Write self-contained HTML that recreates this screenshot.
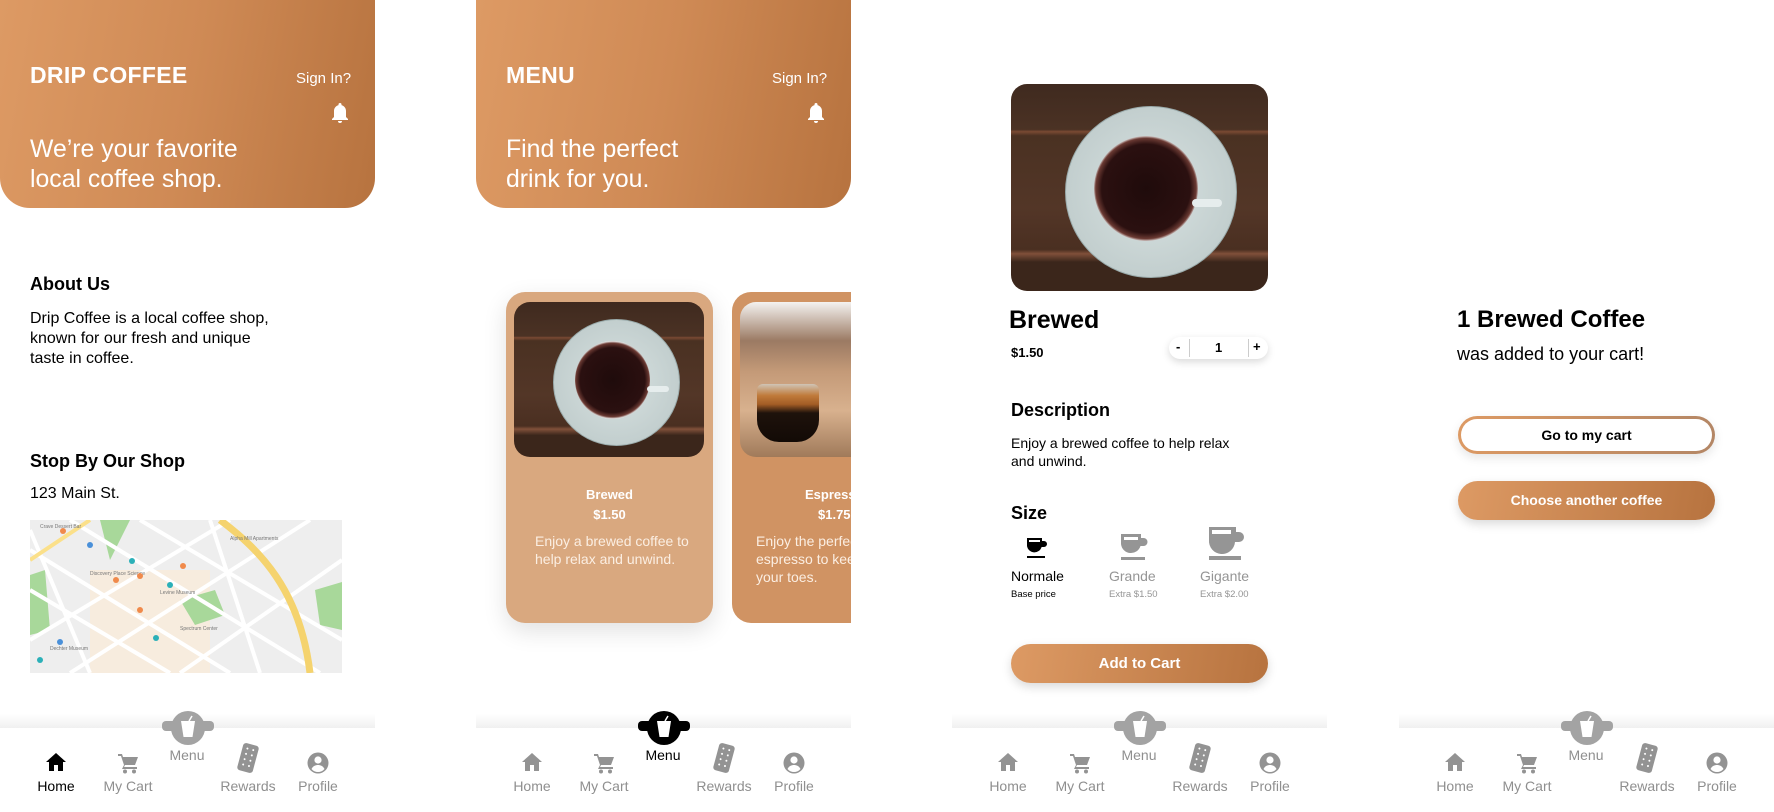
<!DOCTYPE html>
<html><head><meta charset="utf-8">
<style>
*{margin:0;padding:0;box-sizing:border-box}
body{width:1774px;height:812px;background:#fff;position:relative;overflow:hidden;font-family:"Liberation Sans","DejaVu Sans",sans-serif;color:#000}
.a{position:absolute}
.scr{position:absolute;top:0;width:375px;height:812px;overflow:hidden}
.hdr{position:absolute;left:0;top:0;width:375px;height:208px;border-radius:0 0 30px 30px;background:linear-gradient(100deg,#dd9a64 0%,#cf8a55 50%,#b7733f 100%);color:#fff}
.hdr .t{position:absolute;left:30px;top:62px;font-size:23px;font-weight:bold;letter-spacing:.3px}
.hdr .s{position:absolute;left:296px;top:70px;font-size:15px}
.hdr .b{position:absolute;left:331px;top:102px}
.hdr .g{position:absolute;left:30px;top:135px;font-size:24.8px;line-height:30px}
.nav{position:absolute;left:0;top:700px;width:375px;height:112px}
.nav .sh{position:absolute;left:0;top:14px;width:375px;height:14px;background:linear-gradient(#fff,#f0f0f0)}
.nav .bg{position:absolute;left:0;top:28px;width:375px;height:84px;background:#fff}
.nav .lbl{position:absolute;top:78px;font-size:14px;color:#8f8f8f;text-align:center;width:80px}
.nav svg{position:absolute}
.gbtn{position:absolute;border-radius:20px;background:linear-gradient(100deg,#dd9a64,#b7733f);color:#fff;font-weight:bold;text-align:center;box-shadow:0 4px 10px rgba(0,0,0,.15)}
.coffee{position:absolute;overflow:hidden;background:
 linear-gradient(180deg,#3f2a1f 0%,#4b3224 22%,#7a4a33 23%,#4a3122 25%,#533627 60%,#4a2f21 80%,#80503a 82%,#3b261b 86%,#3b261b 100%)}
</style></head><body>

<!-- SCREEN 1 -->
<div class="scr" style="left:0">
 <div class="hdr">
  <div class="t">DRIP COFFEE</div>
  <div class="s">Sign In?</div>
  <svg class="b" width="18" height="22" viewBox="0 0 18 22"><path d="M9 1a1.5 1.5 0 0 1 1.5 1.5v.6C13.3 3.8 15 6.3 15 9v6l2 2v1H1v-1l2-2V9c0-2.7 1.7-5.2 4.5-5.9v-.6A1.5 1.5 0 0 1 9 1zM7 19h4a2 2 0 0 1-4 0z" fill="#fff"/></svg>
  <div class="g">We’re your favorite<br>local coffee shop.</div>
 </div>
 <div class="a" style="left:30px;top:274px;font-size:18px;font-weight:bold">About Us</div>
 <div class="a" style="left:30px;top:309px;font-size:16px;line-height:20px">Drip Coffee is a local coffee shop,<br>known for our fresh and unique<br>taste in coffee.</div>
 <div class="a" style="left:30px;top:451px;font-size:18px;font-weight:bold">Stop By Our Shop</div>
 <div class="a" style="left:30px;top:485px;font-size:16px">123 Main St.</div>
 <svg class="a" style="left:30px;top:520px" width="312" height="153" viewBox="0 0 312 153">
  <rect width="312" height="153" fill="#eeeeee"/>
  <rect x="60" y="50" width="120" height="103" fill="#f7ecde"/>
  <path d="M70 0 L100 0 L80 40 Z" fill="#a8d89a"/>
  <path d="M150 80 L185 70 L195 95 L165 105 Z" fill="#a8d89a"/>
  <path d="M285 70 L312 62 L312 110 L290 105 Z" fill="#a8d89a"/>
  <path d="M0 55 L15 50 L20 110 L0 115 Z" fill="#a8d89a"/>
  <g stroke="#fff" stroke-width="4" fill="none">
   <path d="M0 30 L200 153"/><path d="M0 70 L140 153"/><path d="M40 0 L290 153"/><path d="M110 0 L312 120"/><path d="M0 120 L200 0"/><path d="M40 153 L280 0"/><path d="M150 153 L312 40"/><path d="M0 10 L60 153"/><path d="M180 0 L230 153"/>
  </g>
  <path d="M0 40 L60 0" stroke="#fbe08a" stroke-width="4" fill="none"/>
  <path d="M190 0 C230 30 270 70 280 153" stroke="#f5d36e" stroke-width="7" fill="none"/>
  <g font-size="5" fill="#777"><text x="10" y="8">Crave Dessert Bar</text><text x="200" y="20">Alpha Mill Apartments</text><text x="60" y="55">Discovery Place Science</text><text x="130" y="74">Levine Museum</text><text x="20" y="130">Dechter Museum</text><text x="150" y="110">Spectrum Center</text></g>
  <g fill="#f08a4b"><circle cx="33" cy="11" r="3"/><circle cx="153" cy="46" r="3"/><circle cx="110" cy="56" r="3"/><circle cx="110" cy="90" r="3"/><circle cx="86" cy="60" r="3"/></g>
  <g fill="#4a90d9"><circle cx="60" cy="25" r="3"/><circle cx="30" cy="122" r="3"/></g>
  <g fill="#2bb0b8"><circle cx="102" cy="41" r="3"/><circle cx="140" cy="65" r="3"/><circle cx="126" cy="118" r="3"/><circle cx="10" cy="140" r="3"/></g>
 </svg>
 <div class="nav" id="n1"></div>
</div>

<!-- SCREEN 2 -->
<div class="scr" style="left:476px">
 <div class="hdr">
  <div class="t">MENU</div>
  <div class="s">Sign In?</div>
  <svg class="b" width="18" height="22" viewBox="0 0 18 22"><path d="M9 1a1.5 1.5 0 0 1 1.5 1.5v.6C13.3 3.8 15 6.3 15 9v6l2 2v1H1v-1l2-2V9c0-2.7 1.7-5.2 4.5-5.9v-.6A1.5 1.5 0 0 1 9 1zM7 19h4a2 2 0 0 1-4 0z" fill="#fff"/></svg>
  <div class="g">Find the perfect<br>drink for you.</div>
 </div>
 <div class="a" style="left:30px;top:292px;width:207px;height:331px;border-radius:19px;background:#d9a87f;box-shadow:0 8px 24px rgba(0,0,0,.12);color:#fff">
  <div class="coffee" style="left:8px;top:10px;width:190px;height:155px;border-radius:16px">
   <div class="a" style="left:39px;top:17px;width:127px;height:127px;border-radius:50%;background:radial-gradient(circle,#d8e2e1 0%,#b9c6c6 100%);border:1px solid #9aa"></div>
   <div class="a" style="left:61px;top:39px;width:75px;height:78px;border-radius:50%;background:radial-gradient(circle,#1f0b0b 0%,#2b1010 60%,#6b3a33 68%,#efefef 72%,#e8eeee 100%)"></div>
   <div class="a" style="left:133px;top:84px;width:22px;height:6px;background:#e6eded;border-radius:3px"></div>
  </div>
  <div class="a" style="left:0;top:193px;width:207px;text-align:center;font-weight:bold;font-size:13px;line-height:20px">Brewed<br>$1.50</div>
  <div class="a" style="left:29px;top:240px;font-size:14px;line-height:18px;color:#fbeee2">Enjoy a brewed coffee to<br>help relax and unwind.</div>
 </div>
 <div class="a" style="left:256px;top:292px;width:207px;height:331px;border-radius:19px;background:#d09363;color:#fff;overflow:hidden">
  <div class="a" style="left:8px;top:10px;width:190px;height:155px;border-radius:16px;background:linear-gradient(180deg,#f4f2f0 0%,#9b7a63 25%,#c49a78 45%,#d8b18e 70%,#a07a5a 100%)">
   <div class="a" style="left:17px;top:82px;width:62px;height:58px;border-radius:6px 6px 22px 22px;background:linear-gradient(180deg,#d0c4b5 0%,#c07a3a 20%,#a35d25 35%,#1e120b 50%,#120a06 100%)"></div>
  </div>
  <div class="a" style="left:73px;top:193px;font-weight:bold;font-size:13px;line-height:20px;white-space:nowrap">Espresso</div>
  <div class="a" style="left:86px;top:213px;font-weight:bold;font-size:13px;line-height:20px;white-space:nowrap">$1.75</div>
  <div class="a" style="left:24px;top:240px;font-size:14px;line-height:18px;color:#fbeee2;white-space:nowrap">Enjoy the perfect<br>espresso to keep<br>your toes.</div>
 </div>
 <div class="nav" id="n2"></div>
</div>

<!-- SCREEN 3 -->
<div class="scr" style="left:952px">
 <div class="coffee" style="left:59px;top:84px;width:257px;height:207px;border-radius:16px">
  <div class="a" style="left:54px;top:22px;width:172px;height:172px;border-radius:50%;background:radial-gradient(circle,#d8e2e1 0%,#b9c6c6 100%);border:1px solid #9aa"></div>
  <div class="a" style="left:83px;top:52px;width:104px;height:105px;border-radius:50%;background:radial-gradient(circle,#1f0b0b 0%,#2b1010 60%,#6b3a33 68%,#efefef 72%,#e8eeee 100%)"></div>
  <div class="a" style="left:181px;top:115px;width:30px;height:8px;background:#e6eded;border-radius:4px"></div>
 </div>
 <div class="a" style="left:57px;top:306px;font-size:25px;font-weight:bold">Brewed</div>
 <div class="a" style="left:59px;top:345px;font-size:13px;font-weight:bold">$1.50</div>
 <div class="a" style="left:217px;top:337px;width:99px;height:22px;border-radius:11px;background:#fff;box-shadow:0 3px 8px rgba(0,0,0,.15);font-size:13px;font-weight:bold">
  <span class="a" style="left:7px;top:2px">-</span>
  <span class="a" style="left:20px;top:2px;width:1px;height:18px;background:#ccc"></span>
  <span class="a" style="left:46px;top:3px">1</span>
  <span class="a" style="left:79px;top:2px;width:1px;height:18px;background:#ccc"></span>
  <span class="a" style="left:84px;top:2px">+</span>
 </div>
 <div class="a" style="left:59px;top:400px;font-size:18px;font-weight:bold">Description</div>
 <div class="a" style="left:59px;top:434px;font-size:14px;line-height:18px">Enjoy a brewed coffee to help relax<br>and unwind.</div>
 <div class="a" style="left:59px;top:503px;font-size:18px;font-weight:bold">Size</div>
 <svg class="a" style="left:74px;top:536px" width="22" height="24" viewBox="0 0 22 24"><path d="M1 2h15v3h2a3 3 0 0 1 0 6h-2.4A7.5 7.5 0 0 1 1 10z" fill="#000"/><rect x="3" y="4" width="11" height="2" fill="#fff"/><rect x="1" y="20" width="18" height="2" fill="#000"/></svg>
 <svg class="a" style="left:168px;top:532px" width="28" height="29" viewBox="0 0 28 29"><path d="M1 2h20v4h2.5a4 4 0 0 1 0 8H20.5A10 10 0 0 1 1 12z" fill="#959595"/><rect x="4" y="5" width="14" height="3" fill="#fff"/><rect x="1" y="25" width="24" height="3" fill="#959595"/></svg>
 <svg class="a" style="left:256px;top:525px" width="36" height="36" viewBox="0 0 36 36"><path d="M1 2h27v5h3a5 5 0 0 1 0 10H27A13 13 0 0 1 1 15z" fill="#959595"/><rect x="4" y="5" width="19" height="4" fill="#fff"/><rect x="1" y="31" width="32" height="4" fill="#959595"/></svg>
 <div class="a" style="left:59px;top:568px;font-size:14px">Normale</div>
 <div class="a" style="left:59px;top:589px;font-size:9.5px">Base price</div>
 <div class="a" style="left:157px;top:568px;font-size:14px;color:#959595">Grande</div>
 <div class="a" style="left:157px;top:589px;font-size:9.5px;color:#959595">Extra $1.50</div>
 <div class="a" style="left:248px;top:568px;font-size:14px;color:#959595">Gigante</div>
 <div class="a" style="left:248px;top:589px;font-size:9.5px;color:#959595">Extra $2.00</div>
 <div class="gbtn" style="left:59px;top:644px;width:257px;height:39px;line-height:39px;font-size:15px">Add to Cart</div>
 <div class="nav" id="n3"></div>
</div>

<!-- SCREEN 4 -->
<div class="scr" style="left:1399px">
 <div class="a" style="left:58px;top:306px;font-size:24px;font-weight:bold">1 Brewed Coffee</div>
 <div class="a" style="left:58px;top:344px;font-size:18px">was added to your cart!</div>
 <div class="a" style="left:59px;top:416px;width:257px;height:38px;border-radius:19px;background:linear-gradient(100deg,#dd9a64,#b38665);padding:3px;box-shadow:0 4px 10px rgba(0,0,0,.1)">
  <div style="width:100%;height:100%;border-radius:16px;background:#fff;text-align:center;line-height:32px;font-size:14px;font-weight:bold">Go to my cart</div>
 </div>
 <div class="gbtn" style="left:59px;top:481px;width:257px;height:39px;line-height:39px;font-size:14px">Choose another coffee</div>
 <div class="nav" id="n4"></div>
</div>

<template id="navt">
 <div class="sh"></div><div class="bg"></div>
 <svg style="left:162px;top:11px" width="52" height="34" viewBox="0 0 52 34"><rect x="0" y="10" width="52" height="10" rx="4" class="mc"/><circle cx="26" cy="17" r="17" class="mc"/><path d="M19 10h14l-2.5 16h-9z" fill="#fff"/><path d="M27 10l3-5" stroke="#fff" stroke-width="1.5"/></svg>
 <svg style="left:45px;top:52px" width="22" height="20" viewBox="0 0 22 20"><path d="M11 1L1 10h3v9h5v-6h4v6h5v-9h3z" class="hm"/></svg>
 <svg style="left:117px;top:52px" width="22" height="22" viewBox="0 0 22 22"><path d="M1 2h4l1 3h15l-3 8H8l-1 2h13v2H5l2-4L4 4H1z" fill="#939393"/><circle cx="8" cy="19.5" r="2" fill="#939393"/><circle cx="17" cy="19.5" r="2" fill="#939393"/></svg>
 <svg style="left:236px;top:42px" width="24" height="32" viewBox="0 0 24 32"><g transform="rotate(15 12 16)"><rect x="4" y="2" width="16" height="28" rx="3" fill="#939393"/><g fill="#fff"><circle cx="9" cy="7" r="1"/><circle cx="15" cy="7" r="1"/><circle cx="9" cy="12.5" r="1"/><circle cx="15" cy="12.5" r="1"/><circle cx="9" cy="18" r="1"/><circle cx="15" cy="18" r="1"/><circle cx="9" cy="23.5" r="1"/><circle cx="15" cy="23.5" r="1"/></g></g></svg>
 <svg style="left:307px;top:52px" width="22" height="22" viewBox="0 0 22 22"><circle cx="11" cy="11" r="10.5" fill="#939393"/><circle cx="11" cy="8" r="3.6" fill="#fff"/><path d="M4.5 17c1.5-3 4-4 6.5-4s5 1 6.5 4a8.5 8.5 0 0 1-13 0z" fill="#fff"/></svg>
 <div class="lbl hl" style="left:16px">Home</div>
 <div class="lbl" style="left:88px">My Cart</div>
 <div class="lbl ml" style="left:147px;top:47px">Menu</div>
 <div class="lbl" style="left:208px">Rewards</div>
 <div class="lbl" style="left:278px">Profile</div>
</template>
<script>
var t=document.getElementById('navt').innerHTML;
['n1','n2','n3','n4'].forEach(function(id,i){
 var n=document.getElementById(id);n.innerHTML=t;
 var home=i===0,menu=i===1;
 n.querySelectorAll('.mc').forEach(function(e){e.setAttribute('fill',menu?'#000':'#a3a3a3')});
 n.querySelector('.hm').setAttribute('fill',home?'#000':'#939393');
 if(home)n.querySelector('.hl').style.color='#000';
 if(menu)n.querySelector('.ml').style.color='#000';
});
</script>
</body></html>
